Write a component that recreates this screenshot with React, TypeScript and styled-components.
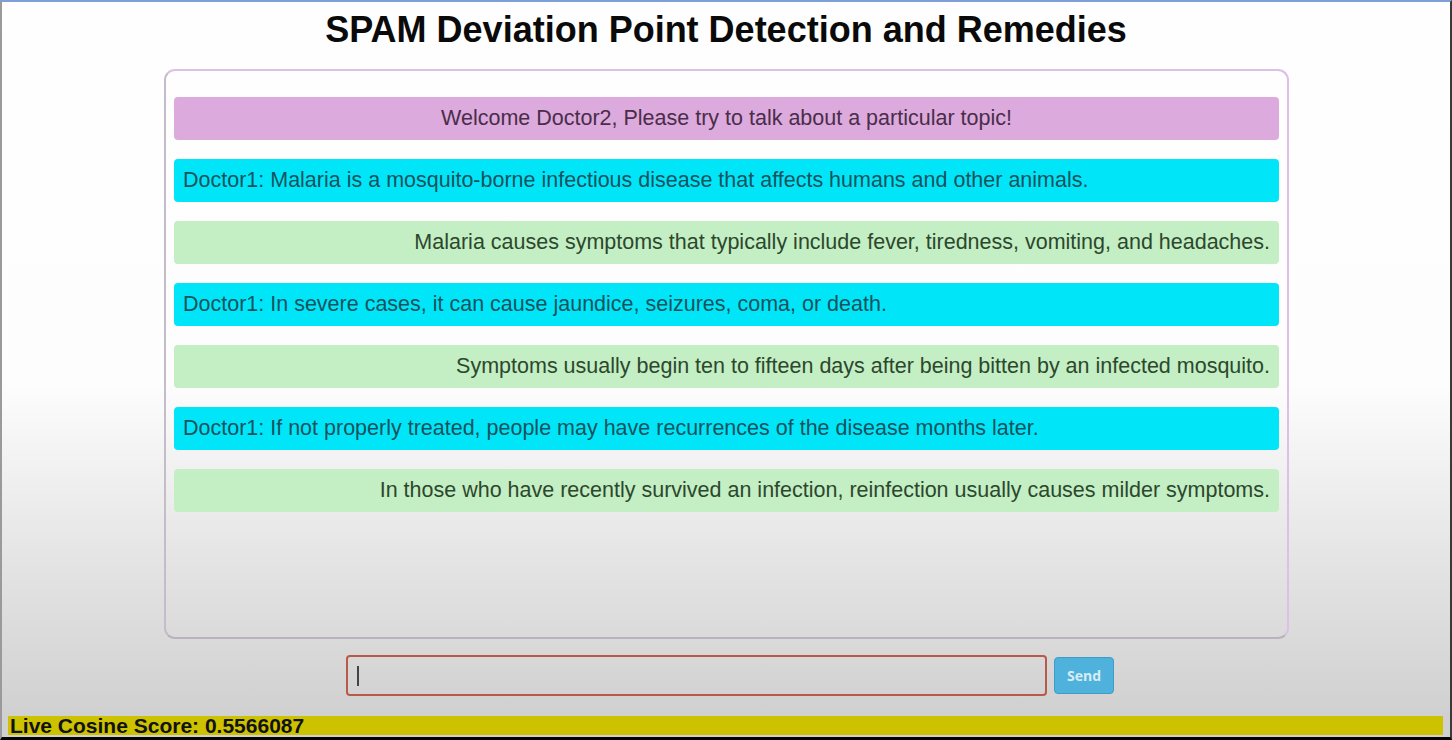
import React from "react";
import styled, { createGlobalStyle } from "styled-components";

const Global = createGlobalStyle`
  html, body { margin: 0; padding: 0; background: #000; }
  body { font-family: "Liberation Sans", Arial, sans-serif; }
`;

const Frame = styled.div`
  width: 1452px;
  height: 740px;
  box-sizing: border-box;
  border-top: 2px solid #7f9fd6;
  border-left: 2px solid #9a9a9a;
  border-right: 2px solid #3a3a3a;
  border-bottom: 3px solid #050505;
  background: linear-gradient(
    to bottom,
    #fefefe 0px,
    #fdfdfd 380px,
    #e4e4e4 560px,
    #d0d0d0 715px
  );
  display: flex;
  flex-direction: column;
  overflow: hidden;
`;

const Title = styled.h1`
  margin: 0;
  height: 58px;
  padding-top: 7px;
  box-sizing: border-box;
  text-align: center;
  font-size: 36px;
  font-weight: bold;
  color: #0a0a0a;
  line-height: 42px;
`;

const ChatBox = styled.div`
  width: 1125px;
  height: 570px;
  margin: 9px 0 0 162px;
  box-sizing: border-box;
  border: 2px solid #dcc0e6;
  border-bottom-color: #b9b2bc;
  border-left-color: #c4bcc8;
  border-radius: 11px;
  padding: 26px 8px 0 8px;
  display: flex;
  flex-direction: column;
  gap: 19px;
`;

type Kind = "welcome" | "doctor" | "reply";

const bg: Record<Kind, string> = {
  welcome: "#dcaadc",
  doctor: "#00e6f8",
  reply: "#c4eec4",
};
const fg: Record<Kind, string> = {
  welcome: "#4a2d4a",
  doctor: "#17535e",
  reply: "#2c482c",
};
const align: Record<Kind, string> = {
  welcome: "center",
  doctor: "left",
  reply: "right",
};

const Message = styled.div<{ $kind: Kind }>`
  height: 43px;
  box-sizing: border-box;
  padding: 0 9px;
  border-radius: 4px;
  background: ${(p) => bg[p.$kind]};
  color: ${(p) => fg[p.$kind]};
  text-align: ${(p) => align[p.$kind]};
  font-size: 21.5px;
  line-height: 43px;
  white-space: nowrap;
`;

const InputRow = styled.div`
  display: flex;
  align-items: center;
  gap: 7px;
  margin: 16px 0 0 344px;
  height: 41px;
`;

const TextInput = styled.div`
  width: 701px;
  height: 41px;
  box-sizing: border-box;
  border: 2px solid #b85a48;
  border-radius: 4px;
  display: flex;
  align-items: center;
  padding-left: 9px;
`;

const Caret = styled.span`
  width: 2px;
  height: 20px;
  background: #444;
`;

const SendButton = styled.button`
  width: 60px;
  height: 37px;
  border: 1px solid #3e9cc6;
  border-radius: 4px;
  background: #4fb2dc;
  color: #d8ecf4;
  font-family: "Open Sans", "Liberation Sans", sans-serif;
  font-weight: bold;
  font-size: 14px;
  padding: 0;
`;

const ScoreBar = styled.div`
  margin: 20px 7px 0 6px;
  height: 19px;
  background: #cdc200;
  font-size: 21px;
  font-weight: bold;
  color: #111;
  line-height: 19px;
  padding-left: 2px;
  box-sizing: border-box;
  white-space: nowrap;
`;

const messages: { kind: Kind; text: string }[] = [
  { kind: "welcome", text: "Welcome Doctor2, Please try to talk about a particular topic!" },
  { kind: "doctor", text: "Doctor1: Malaria is a mosquito-borne infectious disease that affects humans and other animals." },
  { kind: "reply", text: "Malaria causes symptoms that typically include fever, tiredness, vomiting, and headaches." },
  { kind: "doctor", text: "Doctor1: In severe cases, it can cause jaundice, seizures, coma, or death." },
  { kind: "reply", text: "Symptoms usually begin ten to fifteen days after being bitten by an infected mosquito." },
  { kind: "doctor", text: "Doctor1: If not properly treated, people may have recurrences of the disease months later." },
  { kind: "reply", text: "In those who have recently survived an infection, reinfection usually causes milder symptoms." },
];

export default function App() {
  return (
    <>
      <Global />
      <Frame>
        <Title>SPAM Deviation Point Detection and Remedies</Title>
        <ChatBox>
          {messages.map((m, i) => (
            <Message key={i} $kind={m.kind}>
              {m.text}
            </Message>
          ))}
        </ChatBox>
        <InputRow>
          <TextInput>
            <Caret />
          </TextInput>
          <SendButton>Send</SendButton>
        </InputRow>
        <ScoreBar>Live Cosine Score: 0.5566087</ScoreBar>
      </Frame>
    </>
  );
}
